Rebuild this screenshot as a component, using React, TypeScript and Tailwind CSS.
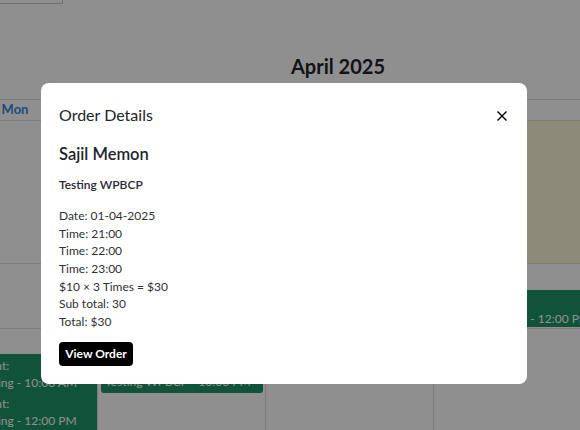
import React from "react";

const font = "font-['Lato','Noto_Sans',sans-serif]";

function EventBox({ lines, className }: { lines: string[]; className: string }) {
  return (
    <div className={`bg-[#1d9468] text-white text-[12px] leading-[17px] overflow-hidden whitespace-nowrap ${className}`}>
      {lines.map((l, i) => (
        <div key={i}>{l}</div>
      ))}
    </div>
  );
}

export default function App() {
  return (
    <div className={`relative w-[580px] h-[430px] overflow-hidden bg-white ${font}`}>
      {/* Calendar page (behind overlay) */}
      <div className="flex flex-col">
        <div className="h-[99px] flex flex-col">
          <div className="w-[63px] h-[4px] border-r border-b border-[#c9c9c9]" />
          <div className="ml-[291px] mt-[48px] text-[20px] leading-[28px] font-bold text-[#212529]">April 2025</div>
        </div>
        <div className="ml-[-71px] w-[672px]">
          {/* header */}
          <div className="grid grid-cols-4 h-[22px] border-t border-b border-[#dfdfdf]">
            <div className="flex items-center justify-center pl-[4px] text-[13px] font-bold text-[#3788d8]">Mon</div>
            <div className="border-l border-[#dfdfdf]" />
            <div className="border-l border-[#dfdfdf]" />
            <div className="border-l border-[#dfdfdf]" />
          </div>
          {/* week row 1 */}
          <div className="grid grid-cols-4 h-[143px] border-b border-[#dfdfdf]">
            <div />
            <div className="border-l border-[#dfdfdf]" />
            <div className="border-l border-[#dfdfdf]" />
            <div className="border-l border-[#dfdfdf] bg-[#fcf6da]" />
          </div>
          {/* week row 2 */}
          <div className="grid grid-cols-4 h-[65px] border-b border-[#dfdfdf]">
            <div />
            <div className="border-l border-[#dfdfdf]" />
            <div className="border-l border-[#dfdfdf]" />
            <div className="border-l border-[#dfdfdf] pt-[26px]">
              <EventBox className="h-[37px] ml-[3px] pl-0 pt-[3px]" lines={["Sajil Memon", "Testing Skin Care - 12:00 PM"]} />
            </div>
          </div>
          {/* week row 3 */}
          <div className="grid grid-cols-4 h-[120px]">
            <div className="pt-[25px]">
              <EventBox className="h-[38px] pl-[1px] pt-[3px]" lines={["Booking Event:", "Testing Booking - 10:00 AM"]} />
              <EventBox className="h-[40px] pl-[1px] pt-[3px]" lines={["Booking Event:", "Testing Booking - 12:00 PM"]} />
            </div>
            <div className="border-l border-[#dfdfdf] pt-[25px]">
              <EventBox className="h-[39px] ml-[3px] mr-[2px] rounded-[3px] pl-[4px] pt-[2px]" lines={["Sajil Memon", "Testing WPBCP - 10:00 PM"]} />
            </div>
            <div className="border-l border-[#dfdfdf]" />
            <div className="border-l border-[#dfdfdf]" />
          </div>
        </div>
      </div>

      {/* Overlay */}
      <div className="absolute inset-0 bg-black/[0.44]" />

      {/* Modal */}
      <div className="absolute left-[41px] top-[83px] w-[486px] h-[301px] rounded-[8px] bg-white pl-[18px] pr-[20px] pt-[20px] flex flex-col">
        <div className="flex items-center justify-between h-[24px]">
          <div className="text-[16px] leading-[24px] text-[#212529]">Order Details</div>
          <svg width="10" height="10" viewBox="0 0 10 10" className="mt-[2px]">
            <path d="M1 1L9 9M9 1L1 9" stroke="#000" strokeWidth="1.4" strokeLinecap="square" />
          </svg>
        </div>
        <div className="mt-[15px] text-[16.5px] leading-[24px] font-semibold text-[#212529]">Sajil Memon</div>
        <div className="mt-[10px] text-[12px] leading-[18px] font-semibold text-[#2a2a35]">Testing WPBCP</div>
        <div className="mt-[13px] text-[12px] leading-[17.67px] text-[#2f3036]">
          <div>Date: 01-04-2025</div>
          <div>Time: 21:00</div>
          <div>Time: 22:00</div>
          <div>Time: 23:00</div>
          <div>$10 × 3 Times = $30</div>
          <div>Sub total: 30</div>
          <div>Total: $30</div>
        </div>
        <div className="mt-[11px]">
          <button className="h-[24px] w-[74px] rounded-[4px] bg-black text-white text-[12px] font-bold flex items-center justify-center">
            View Order
          </button>
        </div>
      </div>
    </div>
  );
}
